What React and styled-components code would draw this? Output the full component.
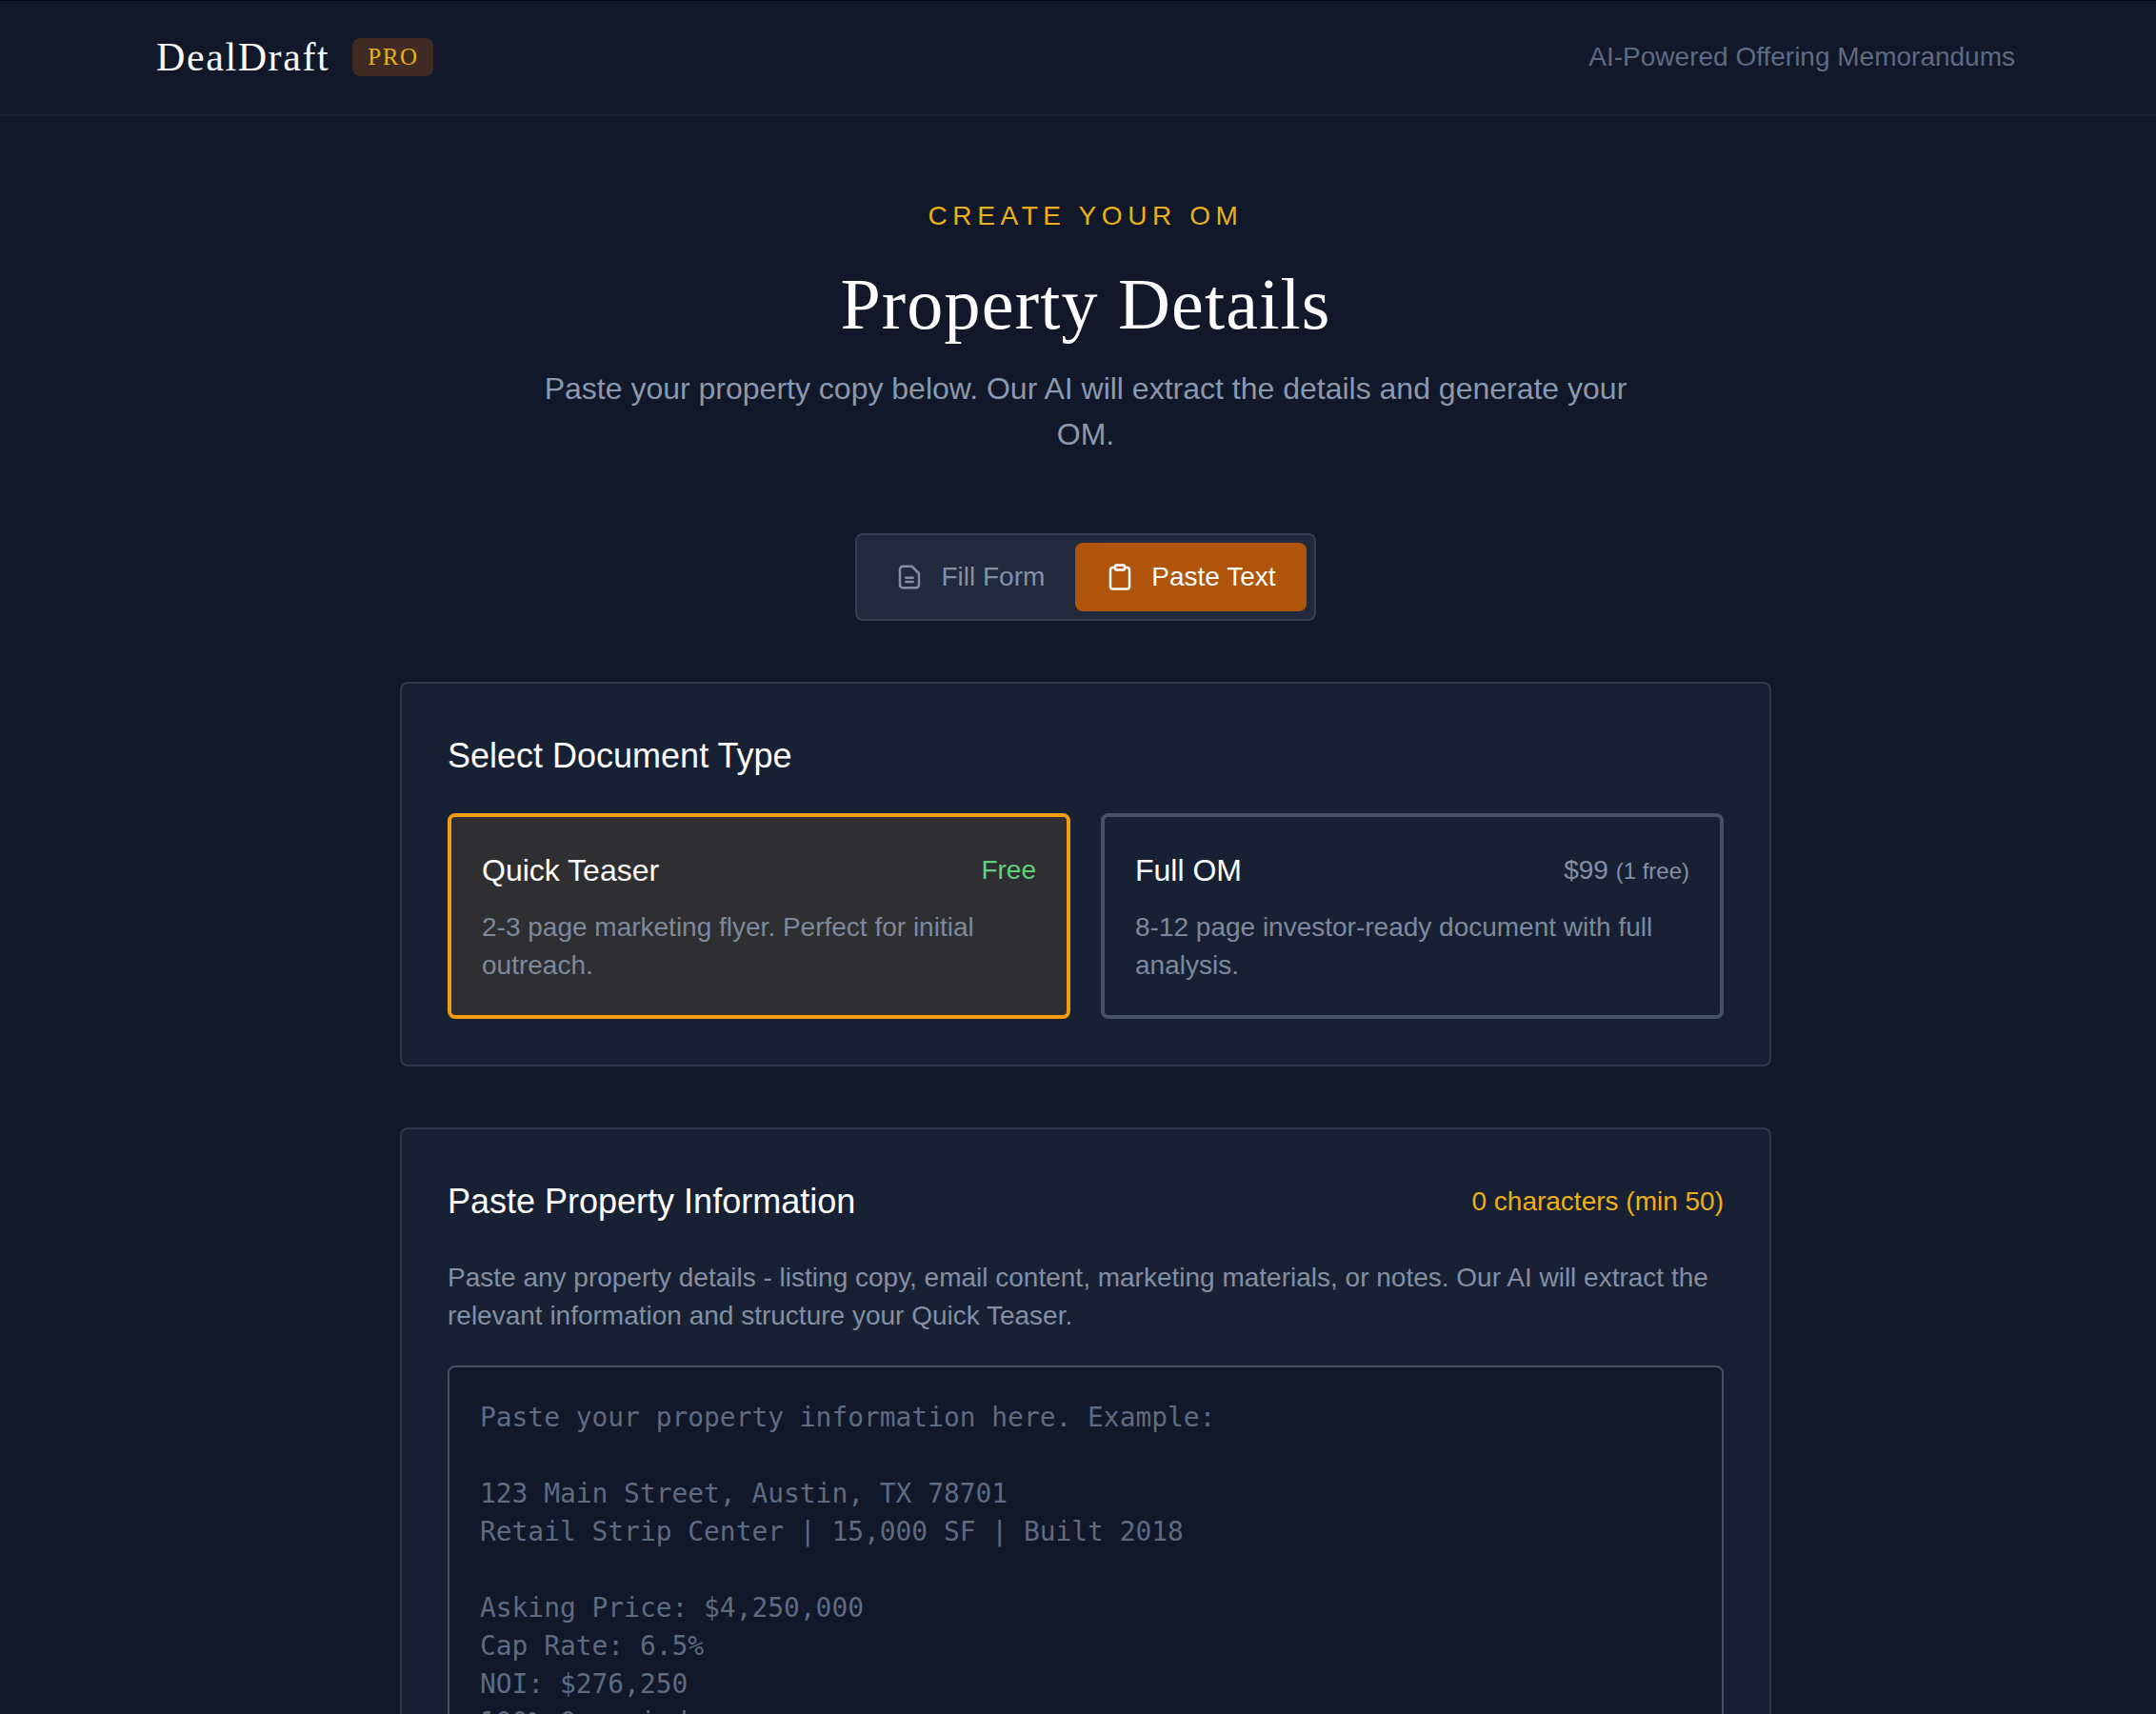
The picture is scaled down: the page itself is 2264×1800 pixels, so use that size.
import styled, { createGlobalStyle } from "styled-components";
import { Clipboard } from "lucide-react";

const sans = `"Liberation Sans", Arial, sans-serif`;
const serif = `"Liberation Serif", Georgia, serif`;

const placeholder = `Paste your property information here. Example:

123 Main Street, Austin, TX 78701
Retail Strip Center | 15,000 SF | Built 2018

Asking Price: $4,250,000
Cap Rate: 6.5%
NOI: $276,250
100% Occupied`;

function FormIcon() {
  return (
    <svg width="30" height="30" viewBox="0 0 24 24" fill="none" stroke="currentColor" strokeWidth="2" strokeLinecap="round" strokeLinejoin="round">
      <path d="M14 3H6.5A2.5 2.5 0 0 0 4 5.5v13A2.5 2.5 0 0 0 6.5 21h11a2.5 2.5 0 0 0 2.5-2.5V9Z" />
      <path d="M9 12.5h6" />
      <path d="M9 16h6" />
    </svg>
  );
}

export default function App() {
  return (
    <>
      <GlobalStyle />
      <Page>
        <Header>
          <Brand>
            <Logo>DealDraft</Logo>
            <ProBadge>PRO</ProBadge>
          </Brand>
          <Tagline>AI-Powered Offering Memorandums</Tagline>
        </Header>
        <Main>
          <Eyebrow>CREATE YOUR OM</Eyebrow>
          <Title>Property Details</Title>
          <Intro>Paste your property copy below. Our AI will extract the details and generate your OM.</Intro>
          <Tabs>
            <Tab>
              <FormIcon />
              Fill Form
            </Tab>
            <Tab $active>
              <Clipboard size={30} strokeWidth={2} />
              Paste Text
            </Tab>
          </Tabs>
          <Card>
            <CardTitle>Select Document Type</CardTitle>
            <TypeGrid>
              <TypeCard $selected>
                <TypeHead>
                  <TypeName>Quick Teaser</TypeName>
                  <Free>Free</Free>
                </TypeHead>
                <TypeText>2-3 page marketing flyer. Perfect for initial outreach.</TypeText>
              </TypeCard>
              <TypeCard>
                <TypeHead>
                  <TypeName>Full OM</TypeName>
                  <Price>
                    $99 <small>(1 free)</small>
                  </Price>
                </TypeHead>
                <TypeText>8-12 page investor-ready document with full analysis.</TypeText>
              </TypeCard>
            </TypeGrid>
          </Card>
          <Card>
            <PasteHead>
              <CardTitle>Paste Property Information</CardTitle>
              <Counter>0 characters (min 50)</Counter>
            </PasteHead>
            <Help>
              Paste any property details - listing copy, email content, marketing materials, or notes. Our AI will
              extract the relevant information and structure your Quick Teaser.
            </Help>
            <PasteArea placeholder={placeholder} />
          </Card>
        </Main>
      </Page>
    </>
  );
}

const GlobalStyle = createGlobalStyle`
  html, body {
    margin: 0;
    height: 1800px;
    overflow: hidden;
    background: #10182a;
  }
  * { box-sizing: border-box; }
`;

const Page = styled.div`
  width: 2280px;
  min-height: 1800px;
  background: #10182a;
  font-family: ${sans};
  border-top: 1px solid #020617;
`;

const Header = styled.header`
  height: 121px;
  padding: 0 164px 2px;
  display: flex;
  align-items: center;
  justify-content: space-between;
  border-bottom: 2px solid #1c2738;
`;

const Brand = styled.div`
  display: flex;
  align-items: center;
  gap: 24px;
`;

const Logo = styled.span`
  font-family: ${serif};
  font-size: 42px;
  letter-spacing: 1.6px;
  color: #f8fafc;
`;

const ProBadge = styled.span`
  font-family: ${serif};
  font-size: 25px;
  letter-spacing: 1.5px;
  color: #ecb016;
  background: #402b23;
  border-radius: 8px;
  padding: 4px 16px;
  line-height: 32px;
`;

const Tagline = styled.span`
  font-size: 28px;
  color: #5f6b80;
`;

const Main = styled.main`
  width: 1440px;
  margin: 0 auto;
  padding-top: 85px;
  display: flex;
  flex-direction: column;
  align-items: center;
`;

const Eyebrow = styled.div`
  font-size: 28px;
  line-height: 40px;
  letter-spacing: 5.6px;
  color: #ecb016;
`;

const Title = styled.h1`
  margin: 28px 0 0;
  font-family: ${serif};
  font-weight: 400;
  font-size: 76px;
  letter-spacing: 1.2px;
  line-height: 88px;
  color: #fff;
`;

const Intro = styled.p`
  margin: 21px 0 0;
  width: 1152px;
  text-align: center;
  font-size: 32px;
  line-height: 48px;
  color: #8b98ad;
`;

const Tabs = styled.div`
  margin-top: 80px;
  display: flex;
  padding: 8px;
  background: #202a3c;
  border: 2px solid #323e52;
  border-radius: 8px;
`;

const Tab = styled.div`
  display: flex;
  align-items: center;
  gap: 18px;
  height: 72px;
  padding: 0 32px;
  border-radius: 8px;
  font-size: 28px;
  background: ${(p) => (p.$active ? "#b0550b" : "transparent")};
  color: ${(p) => (p.$active ? "#fff" : "#8490a5")};
`;

const Card = styled.section`
  width: 100%;
  margin-top: 64px;
  padding: 48px;
  background: #182133;
  border: 2px solid #2e3a4d;
  border-radius: 8px;
`;

const CardTitle = styled.h2`
  margin: 0;
  font-size: 36px;
  line-height: 56px;
  font-weight: 400;
  color: #fff;
`;

const TypeGrid = styled.div`
  margin-top: 32px;
  display: grid;
  grid-template-columns: 1fr 1fr;
  gap: 32px;
`;

const TypeCard = styled.div`
  padding: 32px;
  border-radius: 8px;
  border: 4px solid ${(p) => (p.$selected ? "#f09d12" : "#455268")};
  background: ${(p) => (p.$selected ? "#2f2f32" : "transparent")};
`;

const TypeHead = styled.div`
  display: flex;
  justify-content: space-between;
  align-items: center;
`;

const TypeName = styled.span`
  font-size: 32px;
  line-height: 48px;
  color: #fff;
`;

const Free = styled.span`
  font-size: 28px;
  color: #5ed17d;
`;

const Price = styled.span`
  font-size: 28px;
  color: #8390a3;

  small {
    font-size: 24px;
  }
`;

const TypeText = styled.p`
  margin: 16px 0 0;
  font-size: 28px;
  line-height: 40px;
  color: #7d899d;
`;

const PasteHead = styled.div`
  display: flex;
  justify-content: space-between;
  align-items: center;
`;

const Counter = styled.span`
  font-size: 28px;
  color: #ecb016;
`;

const Help = styled.p`
  margin: 32px 0 0;
  font-size: 28px;
  line-height: 40px;
  color: #848fa3;
`;

const PasteArea = styled.textarea`
  display: block;
  width: 100%;
  height: 800px;
  margin-top: 32px;
  padding: 33px 32px;
  background: #10182a;
  border: 2px solid #465468;
  border-radius: 8px;
  font-family: "DejaVu Sans Mono", monospace;
  font-size: 27.9px;
  line-height: 40px;
  resize: none;
  outline: none;

  &::placeholder {
    color: #5f6b80;
    opacity: 1;
  }
`;
